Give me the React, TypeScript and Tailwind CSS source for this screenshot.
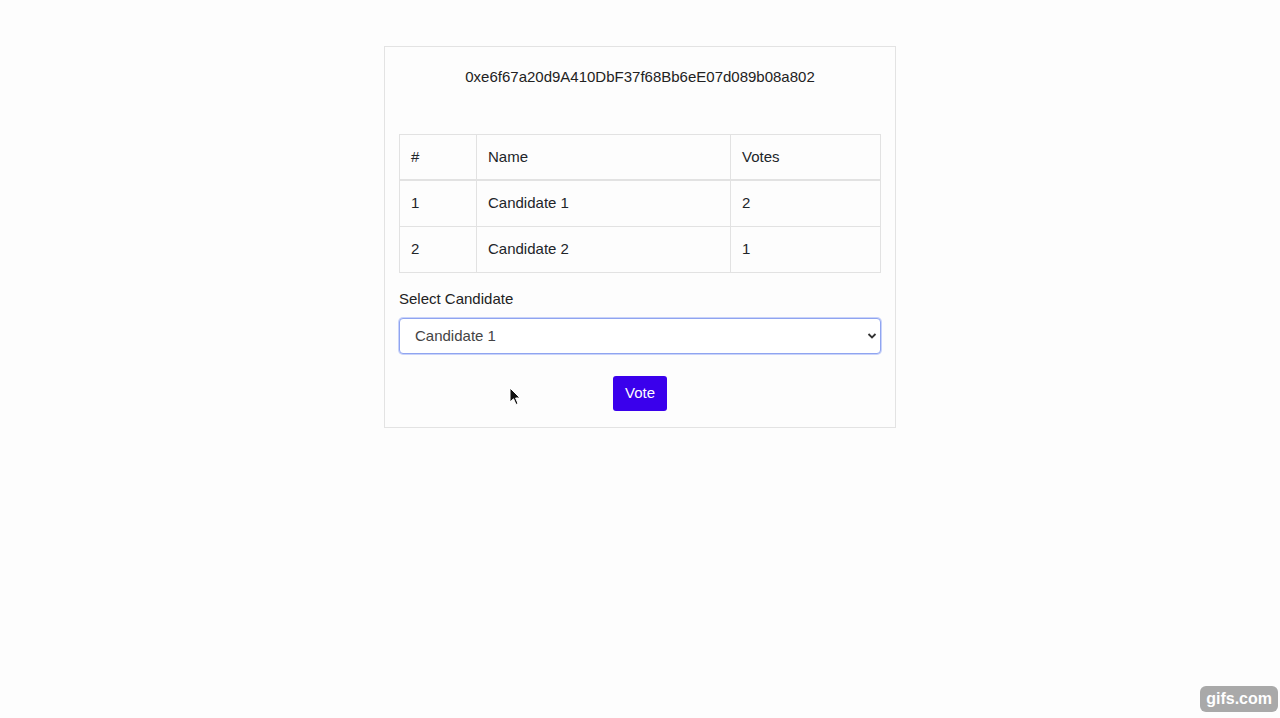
import React from "react";

const candidates = [
  { id: 1, name: "Candidate 1", votes: 2 },
  { id: 2, name: "Candidate 2", votes: 1 },
];

export default function App() {
  return (
    <div
      className="relative min-h-[718px] w-full bg-[#fdfdfd] text-[15px] text-[#212529]"
      style={{ fontFamily: '"Liberation Sans", Arial, sans-serif' }}
    >
      <div className="pt-[46px]">
        <div className="mx-auto w-[512px] border border-[#e3e3e3] bg-[#fdfdfd] px-[14px] pt-[19px] pb-[16px]">
          <p className="text-center leading-[22px] text-[#222]">
            0xe6f67a20d9A410DbF37f68Bb6eE07d089b08a802
          </p>

          <table className="mt-[46px] w-full border-collapse border border-[#e2e2e2]">
            <thead>
              <tr className="h-[45px] border-b-2 border-[#e2e2e2]">
                <th className="w-[77px] border-r border-[#e2e2e2] pl-[11px] text-left font-normal">#</th>
                <th className="w-[254px] border-r border-[#e2e2e2] pl-[11px] text-left font-normal">Name</th>
                <th className="pl-[11px] text-left font-normal">Votes</th>
              </tr>
            </thead>
            <tbody>
              {candidates.map((c) => (
                <tr key={c.id} className="h-[46.5px] border-t border-[#e2e2e2]">
                  <td className="border-r border-[#e2e2e2] pl-[11px]">{c.id}</td>
                  <td className="border-r border-[#e2e2e2] pl-[11px]">{c.name}</td>
                  <td className="pl-[11px]">{c.votes}</td>
                </tr>
              ))}
            </tbody>
          </table>

          <label className="mt-[16px] block leading-[20px] text-[#222]">Select Candidate</label>

          <div className="relative mt-[9px]">
            <select
              defaultValue="1"
              className="h-[36px] w-full appearance-none rounded-[4px] border border-[#8fa4f0] bg-white pl-[15px] text-[15px] text-[#444] shadow-[0_0_0_1px_#c9d3fa] outline-none"
              style={{ fontFamily: '"Liberation Sans", Arial, sans-serif' }}
            >
              <option value="1">Candidate 1</option>
              <option value="2">Candidate 2</option>
            </select>
            <svg
              className="pointer-events-none absolute right-[4px] top-[13px]"
              width="10"
              height="10"
              viewBox="0 0 10 10"
            >
              <path d="M1.5 3 L5 6.5 L8.5 3" fill="none" stroke="#333" strokeWidth="1.8" />
            </svg>
          </div>

          <div className="mt-[22px] flex justify-center">
            <button className="h-[35px] rounded-[3px] bg-[#3a00ec] px-[12px] text-[15px] text-white">
              Vote
            </button>
          </div>
        </div>
      </div>

      {/* mouse cursor */}
      <svg className="absolute left-[509px] top-[387px]" width="13" height="20" viewBox="0 0 13 20">
        <path d="M1 1 L1 15 L4.5 11.8 L7 17.5 L9 16.6 L6.6 11 L11 11 Z" fill="#111" stroke="#fff" strokeWidth="1" />
      </svg>

      {/* watermark */}
      <div className="absolute right-[2px] top-[686px] rounded-[6px] bg-[#a9a9a9] px-[6px] py-[1px] text-[16px] font-bold leading-[24px] text-white">
        gifs.com
      </div>
    </div>
  );
}
